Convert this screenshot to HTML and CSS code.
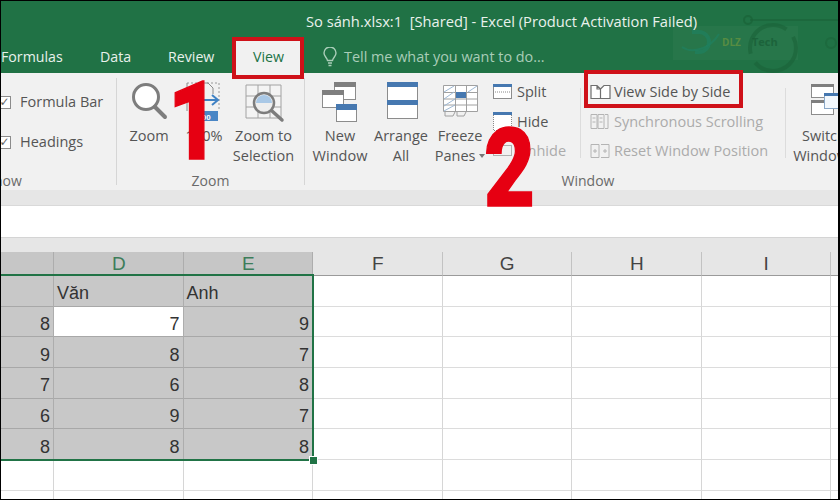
FILE: index.html
```html
<!DOCTYPE html>
<html lang="vi">
<head>
<meta charset="utf-8">
<title>So sánh.xlsx - Excel</title>
<link rel="stylesheet" href="styles.css">
</head>
<body>
<div class="page">
  <header class="titlebar">
    <div class="title">So sánh.xlsx:1&nbsp; [Shared] - Excel (Product Activation Failed)</div>
    <nav class="tabs">
      <span class="tab t-formulas">Formulas</span>
      <span class="tab t-data">Data</span>
      <span class="tab t-review">Review</span>
      <span class="tab tab-active">View</span>
      <span class="tell">
        <svg class="bulb" width="14" height="20" viewBox="0 0 14 20"><path d="M4.500 13.500C4 10.500 1 9.500 1 6a6 6 0 0 1 12 0c0 3.500-3 4.500-3.500 7.500z" fill="none" stroke="#a9cdb8" stroke-width="1.400"/><path d="M5 16h4M5.500 18.500h3" stroke="#a9cdb8" stroke-width="1.500"/></svg>
        Tell me what you want to do...
      </span>
    </nav>
    <svg class="watermark" width="170" height="73" viewBox="670 0 170 73">
      <path d="M750 20H840" stroke="#1a6238" stroke-width="2" opacity=".6"/>
      <circle cx="748" cy="20" r="4" fill="none" stroke="#1a6238" stroke-width="2" opacity=".7"/>
      <circle cx="831" cy="43" r="5" fill="none" stroke="#1a6238" stroke-width="2" opacity=".5"/>
      <rect x="673" y="26" width="125" height="34" fill="#fff" opacity=".03"/>
      <circle cx="773" cy="48" r="23" fill="none" stroke="#1a6238" stroke-width="4" stroke-dasharray="56 10" opacity=".6"/>
      <path d="M692 32h7a10 10 0 0 1 0 20h-4" fill="none" stroke="#1f8060" stroke-width="4" opacity=".7"/>
      <path d="M682 47c10 7 28 2 37-13" fill="none" stroke="#1f8060" stroke-width="2" opacity=".7"/>
      <text x="722" y="46" class="wm-dlz">DLZ</text>
      <text x="752" y="46" class="wm-tech">Tech</text>
    </svg>
  </header>

  <section class="ribbon">
    <div class="group g-show">
      <div class="checks">
        <label class="check"><span class="box">✓</span>Formula Bar</label>
        <label class="check"><span class="box">✓</span>Headings</label>
      </div>
      <div class="glabel">Show</div>
    </div>
    <div class="gsep"></div>

    <div class="group g-zoom">
      <div class="content">
        <div class="btn w64">
          <svg width="64" height="53" viewBox="117 73 64 53"><circle cx="146" cy="97" r="12.500" fill="#fff" stroke="#7d7d7d" stroke-width="3"/><path d="M155 107l10 10" stroke="#7d7d7d" stroke-width="4" stroke-linecap="round"/></svg>
          <span>Zoom</span>
        </div>
        <div class="btn w46">
          <svg width="46" height="53" viewBox="181 73 46 53"><path d="M187 83h32v27" fill="none" stroke="#9a9a9a" stroke-dasharray="2 2"/><path d="M187 83v28M205 83h3l5 5v6" fill="none" stroke="#8a8a8a"/><path d="M203 100h14m-5-5l6 5-6 5" fill="none" stroke="#3f82c4" stroke-width="2"/><rect x="190" y="111" width="28" height="10" fill="#4a86c5"/><text x="204" y="119.500" class="pct">100</text></svg>
          <span>100%</span>
        </div>
        <div class="btn w73">
          <svg width="73" height="53" viewBox="227 73 73 53"><path d="M246 85h35v33h-35zM246 96h35M246 107h35M258 85v33M270 85v33" fill="#f4f4f4" stroke="#a2a2a2"/><circle cx="264" cy="103" r="10" fill="#eee" stroke="#7d7d7d" stroke-width="2.500"/><path d="M256 103a8 8 0 0 1 16 0z" fill="#a9c8e6"/><path d="M272 111l10 9" stroke="#7d7d7d" stroke-width="3.500" stroke-linecap="round"/></svg>
          <span>Zoom to<br>Selection</span>
        </div>
      </div>
      <div class="glabel">Zoom</div>
    </div>
    <div class="gsep"></div>

    <div class="group g-window">
      <div class="content">
        <div class="btn w60 first">
          <svg width="60" height="53" viewBox="310 73 60 53"><rect x="334.500" y="82.500" width="21" height="17" fill="#fff" stroke="#8c8c8c"/><rect x="334" y="82" width="22" height="5" fill="#7f7f7f"/><rect x="322.500" y="90.500" width="21" height="17" fill="#fff" stroke="#8c8c8c"/><rect x="322" y="90" width="22" height="5" fill="#7f7f7f"/><rect x="336.500" y="104.500" width="20" height="17" fill="#fff" stroke="#8c8c8c"/><rect x="336" y="104" width="21" height="6" fill="#4678b0"/></svg>
          <span>New<br>Window</span>
        </div>
        <div class="btn w62">
          <svg width="62" height="53" viewBox="370 73 62 53"><rect x="387.500" y="82.500" width="30" height="36" fill="#fff" stroke="#8c8c8c"/><rect x="387" y="82" width="31" height="5" fill="#4678b0"/><rect x="387" y="100" width="31" height="5" fill="#4678b0"/></svg>
          <span>Arrange<br>All</span>
        </div>
        <div class="btn w56">
          <svg width="56" height="53" viewBox="432 73 56 53"><path d="M443.500 85.500h34v26h-34zM443.500 92.500h34M443.500 99h34M443.500 105h34M455.500 85.500v26M466.500 85.500v26" fill="#fff" stroke="#a0a0a0"/><path d="M444 92l10-6M444 99l10-7M444 106l11-7M444 111l11-6M468 92l9-6" stroke="#9db8d4"/><rect x="456" y="92" width="10" height="6" fill="#4678b0"/><path d="M445 112v4h8l2-4M457 112v4h7l2-4" fill="none" stroke="#a0a0a0"/></svg>
          <span>Freeze<br>Panes <i class="caret"></i></span>
        </div>
        <div class="smalls col-a">
          <div class="small"><svg width="20" height="16" viewBox="0 0 20 16"><rect x=".5" y=".5" width="18" height="14" fill="#fff" stroke="#8c8c8c"/><rect width="19" height="3" fill="#4678b0"/><path d="M2 8h15" stroke="#888" stroke-dasharray="1 1"/></svg><span>Split</span></div>
          <div class="small"><svg width="20" height="20" viewBox="0 0 20 20"><rect width="19" height="3" fill="#4678b0"/><path d="M.5 3v15.500h18V3" fill="#fff" stroke="#8c8c8c" stroke-dasharray="1 1"/></svg><span>Hide</span></div>
          <div class="small off"><svg width="20" height="12" viewBox="0 0 20 12"><rect x=".5" y=".5" width="18" height="10" fill="none" stroke="#b0b0b0"/></svg><span>Unhide</span></div>
        </div>
        <div class="isep"></div>
        <div class="smalls col-b">
          <div class="small"><svg width="22" height="16" viewBox="0 0 22 16"><path d="M1 1.500h6l3.500 3.500v9.500H1zM7 1.500V5h3.500M10.500 5l3.500-3.500h6v13h-9.500" fill="#fff" stroke="#6f6f6f" stroke-width="1.200"/></svg><span>View Side by Side</span></div>
          <div class="small off"><svg width="22" height="18" viewBox="0 0 22 18"><path d="M1 1.500h6v14H1zM8 1.500h6v14H8zM15 1.500h3v14h-3M2.500 5h3M2.500 9h3M9.500 5h3M9.500 9h3" fill="none" stroke="#b4b4b4"/></svg><span>Synchronous Scrolling</span></div>
          <div class="small off"><svg width="22" height="16" viewBox="0 0 22 16"><path d="M1 1.500h8v13H1zM11 1.500h8v13h-8M3 8h4M5 6v4M13 8h4M15 6v4" fill="none" stroke="#b4b4b4"/></svg><span>Reset Window Position</span></div>
        </div>
        <div class="isep"></div>
        <div class="btn w60 last">
          <svg width="60" height="53" viewBox="794 73 60 53"><rect x="811.500" y="84.500" width="22" height="13" fill="#fff" stroke="#8c8c8c"/><rect x="811" y="84" width="23" height="3" fill="#7f7f7f"/><rect x="811.500" y="100.500" width="22" height="14" fill="#fff" stroke="#8c8c8c"/><rect x="811" y="100" width="23" height="3" fill="#7f7f7f"/><rect x="824.500" y="93.500" width="20" height="15" fill="#f3f8fd" stroke="#8aa8c8"/><rect x="824" y="93" width="20" height="3" fill="#4678b0"/></svg>
          <span>Switch<br>Windows</span>
        </div>
      </div>
      <div class="glabel">Window</div>
    </div>
  </section>

  <div class="band"></div>
  <div class="formula"></div>

  <main class="sheet">
    <table class="grid">
      <colgroup><col class="c54"><col class="c130"><col class="c130"><col class="c129"><col class="c130"><col class="c129"><col class="c129"><col class="c129"></colgroup>
      <thead>
        <tr><th class="sel"></th><th class="sel">D</th><th class="sel">E</th><th>F</th><th>G</th><th>H</th><th>I</th><th></th></tr>
      </thead>
      <tbody>
        <tr><td class="sel"></td><td class="sel txt">Văn</td><td class="sel txt">Anh</td><td></td><td></td><td></td><td></td><td></td></tr>
        <tr><td class="sel">8</td><td class="act">7</td><td class="sel">9</td><td></td><td></td><td></td><td></td><td></td></tr>
        <tr><td class="sel">9</td><td class="sel">8</td><td class="sel">7</td><td></td><td></td><td></td><td></td><td></td></tr>
        <tr><td class="sel">7</td><td class="sel">6</td><td class="sel">8</td><td></td><td></td><td></td><td></td><td></td></tr>
        <tr><td class="sel">6</td><td class="sel">9</td><td class="sel">7</td><td></td><td></td><td></td><td></td><td></td></tr>
        <tr><td class="sel">8</td><td class="sel">8</td><td class="sel">8</td><td></td><td></td><td></td><td></td><td></td></tr>
        <tr><td></td><td></td><td></td><td></td><td></td><td></td><td></td><td></td></tr>
        <tr><td></td><td></td><td></td><td></td><td></td><td></td><td></td><td></td></tr>
      </tbody>
    </table>
    <div class="selection"><i class="handle"></i></div>
  </main>

  <div class="mark mark-view"></div>
  <div class="mark mark-side"></div>
  <div class="num num-1">1</div>
  <div class="num num-2">2</div>
  <div class="frame"></div>
</div>
</body>
</html>
```
FILE: styles.css
```css
* { box-sizing: border-box; }
html, body { margin: 0; padding: 0; background: #fff; }
.page {
  position: relative;
  width: 840px;
  height: 500px;
  overflow: hidden;
  font-family: "Open Sans", "Liberation Sans", sans-serif;
  color: #555;
  filter: blur(.3px);
}

/* Title bar */
.titlebar {
  position: relative;
  height: 73px;
  background: #207245;
  color: #e9f1ec;
}
.title {
  height: 40px;
  padding: 11px 0 0 306px;
  font-size: 14.700px;
  line-height: 20px;
  white-space: nowrap;
}
.tabs {
  display: flex;
  height: 33px;
  align-items: stretch;
  font-size: 14.200px;
  white-space: nowrap;
}
.tab { padding-top: 7px; line-height: 20px; }
.t-formulas { margin-left: 1px; width: 99px; }
.t-data { width: 68px; }
.t-review { width: 66px; }
.tab-active {
  width: 68px;
  padding-left: 1px;
  text-align: center;
  background: #f1f1f1;
  color: #217346;
}
.tell {
  display: flex;
  align-items: center;
  gap: 7px;
  margin-left: 21px;
  color: #a9cdb8;
  font-size: 14.400px;
}
.watermark { position: absolute; right: 0; top: 0; }
.wm-dlz { font: bold 10px "Open Sans", sans-serif; fill: #7f9f3c; opacity: .55; }
.wm-tech { font: bold 11px "Open Sans", sans-serif; fill: #1a5f38; opacity: .8; }
.pct { font: bold 8px "Liberation Sans", sans-serif; fill: #fff; text-anchor: middle; }

/* Ribbon */
.ribbon {
  display: flex;
  height: 117px;
  background: #f1f1f1;
  font-size: 14.500px;
  line-height: 20px;
  white-space: nowrap;
}
.group { display: flex; flex-direction: column; flex: none; }
.g-show { width: 224px; margin-left: -108px; }
.g-zoom { width: 187px; }
.g-window { width: 566px; }
.content, .checks { display: flex; height: 97px; }
.checks {
  flex-direction: column;
  padding: 9px 0 0 106px;
}
.check { display: flex; align-items: center; height: 40px; }
.box {
  width: 13px;
  height: 13px;
  margin-right: 9px;
  border: 1px solid #8c8c8c;
  background: #fff;
  color: #666;
  font: 12px/11px "DejaVu Sans", sans-serif;
  text-align: center;
}
.glabel {
  height: 20px;
  padding-top: 1px;
  text-align: center;
  color: #6a6a6a;
  font-size: 14px;
}
.gsep { flex: none; width: 1px; height: 107px; margin-top: 5px; background: #d6d6d6; }
.isep { flex: none; width: 1px; height: 70px; margin-top: 15px; background: #dcdcdc; }

.btn {
  display: flex;
  flex-direction: column;
  align-items: center;
  flex: none;
  text-align: center;
}
.btn svg { display: block; flex: none; }
.w46 { width: 46px; }
.w56 { width: 56px; }
.w60 { width: 60px; }
.w62 { width: 62px; }
.w64 { width: 64px; }
.w73 { width: 73px; }
.first { margin-left: 5px; }
.last { margin-left: 8px; }
.caret {
  display: inline-block;
  vertical-align: 3px;
  border: 3px solid transparent;
  border-top: 4px solid #777;
  border-bottom: 0;
}

.smalls { display: flex; flex-direction: column; flex: none; padding-top: 4px; }
.small { display: flex; align-items: center; height: 29.700px; }
.col-a { width: 92px; padding-left: 5px; }
.col-a svg { margin-right: 4px; flex: none; }
.col-b { width: 204px; padding-left: 9px; }
.col-b svg { margin-right: 2px; flex: none; }
.off { color: #ababab; }

/* Bars above the grid */
.band { height: 16px; background: #e6e6e6; border-bottom: 1px solid #d9d9d9; }
.formula { height: 32px; background: #fff; border-bottom: 1px solid #d4d4d4; }

/* Sheet */
.sheet { position: relative; padding-top: 14px; background: #e6e6e6; height: 262px; }
.grid {
  border-collapse: separate;
  border-spacing: 0;
  table-layout: fixed;
  width: 860px;
  font-family: "Liberation Sans", sans-serif;
  font-size: 18px;
  color: #333;
  background: #fff;
}
.c54 { width: 54px; }
.c129 { width: 129.500px; }
.c130 { width: 129.500px; }
.grid th {
  height: 24px;
  padding: 0 0 0 1px;
  font-weight: normal;
  font-size: 19px;
  line-height: 20px;
  color: #444;
  background: #e6e6e6;
  border-right: 1px solid #c2c2c2;
  border-bottom: 1px solid #9a9a9a;
}
.grid th.sel { background: #c6c6c6; color: #3d7d5a; border-right-color: #adadad; }
.grid tbody tr { height: 30.700px; }
.grid td {
  padding: 5px 3px 0 3px;
  text-align: right;
  line-height: 20px;
  border-right: 1px solid #d6d6d6;
  border-bottom: 1px solid #dcdcdc;
}
.grid td.sel { background: #c8c8c8; border-right-color: #adadad; border-bottom-color: #a8a8a8; }
.grid td.act { background: #fff; border-right-color: #adadad; border-bottom-color: #a8a8a8; }
.grid td.txt { text-align: left; }

.selection {
  position: absolute;
  left: -3px;
  top: 36px;
  width: 317px;
  height: 187px;
  border: 2.500px solid #217346;
}
.handle {
  position: absolute;
  right: -6px;
  bottom: -6px;
  width: 7px;
  height: 7px;
  background: #217346;
  border: 1px solid #fff;
  box-sizing: content-box;
}

/* Annotations */
.mark { position: absolute; border: 4px solid #cf1119; }
.mark-view { left: 232px; top: 37px; width: 72px; height: 42px; }
.mark-side { left: 584px; top: 70px; width: 159px; height: 38px; }
.num {
  position: absolute;
  font-family: Roboto, "Liberation Sans", sans-serif;
  font-weight: 900;
  font-size: 110px;
  line-height: 110px;
  color: #e60012;
  -webkit-text-stroke: 1.500px #e60012;
  transform: scaleX(.8);
  transform-origin: left top;
}
.num-1 { left: 168px; top: 67px; }
.num-2 { left: 484px; top: 114px; }
.frame {
  position: absolute;
  inset: 0;
  border-style: solid;
  border-color: #000;
  border-width: 1px 2px 1px 1px;
}
```
